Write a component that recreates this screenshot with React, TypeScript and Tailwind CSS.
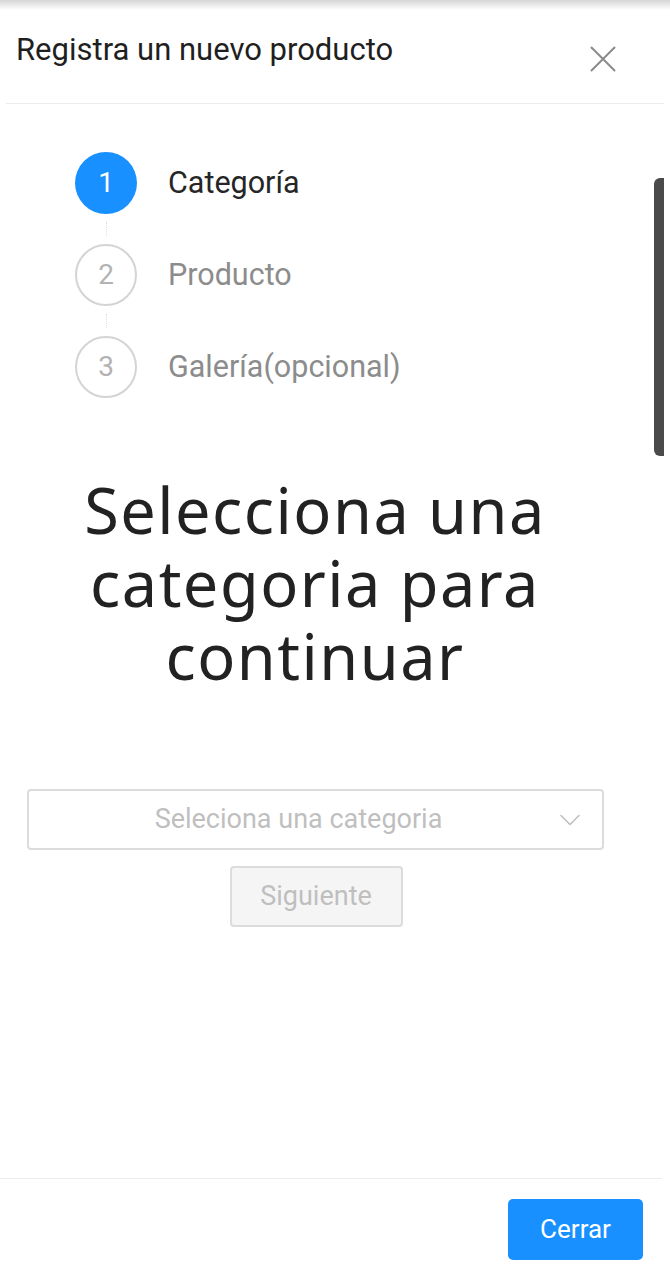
import { ChevronDown, X } from 'lucide-react'

const steps = [
  { n: 1, label: 'Categoría', active: true },
  { n: 2, label: 'Producto', active: false },
  { n: 3, label: 'Galería(opcional)', active: false },
]

export default function App() {
  return (
    <div className="relative w-[670px] h-[1280px] bg-white overflow-hidden font-['Roboto',sans-serif]">
      {/* top shadow */}
      <div className="h-[10px] bg-gradient-to-b from-[#d6d6d6] to-white" />

      {/* Header */}
      <div className="flex items-center justify-between h-[94px] pl-4 pr-[38px] mx-[6px] border-b border-[#ececec]">
        <h1 className="text-[31px] text-[#1f1f1f] -mt-[13px] -ml-[6px]">Registra un nuevo producto</h1>
        <X className="w-[46px] h-[46px] text-[#8a8a8a] mt-[4px]" strokeWidth={1} />
      </div>

      {/* Steps */}
      <div className="flex flex-col pl-[75px] pt-[48px]">
        {steps.map((s, i) => (
          <div key={s.n} className="flex flex-col">
            <div className="flex items-center gap-[31px]">
              <div
                className={
                  s.active
                    ? 'w-[62px] h-[62px] rounded-full bg-[#1890ff] text-white flex items-center justify-center text-[28px]'
                    : 'w-[62px] h-[62px] rounded-full border-2 border-[#d4d4d4] text-[#b3b3b3] flex items-center justify-center text-[28px]'
                }
              >
                {s.n}
              </div>
              <span className={s.active ? 'text-[30.5px] text-[#262626]' : 'text-[30.5px] text-[#8c8c8c]'}>
                {s.label}
              </span>
            </div>
            {i < steps.length - 1 && (
              <div className="w-[62px] h-[30px] flex justify-center py-[8px]">
                <div className="w-px h-full border-l border-dotted border-[#e0e0e0]" />
              </div>
            )}
          </div>
        ))}
      </div>

      {/* Heading */}
      <h2 className="mt-[75px] text-center text-[63px] leading-[73px] text-[#222] font-['Noto_Sans',sans-serif] font-normal tracking-[1.5px] pl-[30px] pr-[70px]">
        Selecciona una categoria para continuar
      </h2>

      {/* Select */}
      <div className="mt-[97px] mx-[27px] w-[577px] h-[61px] border-2 border-[#dcdcdc] rounded-[4px] relative flex items-center justify-center">
        <span className="text-[27px] text-[#bfbfbf] -ml-[34px]">Seleciona una categoria</span>
        <ChevronDown className="absolute right-[14px] w-[36px] h-[36px] text-[#bdbdbd]" strokeWidth={1} />
      </div>

      <div className="flex justify-center mt-[16px] -ml-[38px]">
        <button className="w-[173px] h-[61px] bg-[#f5f5f5] border-2 border-[#dcdcdc] rounded-[4px] text-[27px] text-[#bfbfbf]">
          Siguiente
        </button>
      </div>

      {/* Footer */}
      <div className="absolute left-0 right-[8px] top-[1178px] border-t border-[#ececec] flex justify-end pt-[20px] pr-[19px]">
        <button className="w-[135px] h-[61px] bg-[#1890ff] rounded-[5px] text-[26px] text-white">Cerrar</button>
      </div>

      {/* scrollbar */}
      <div className="absolute right-[6px] top-[178px] w-[10px] h-[278px] bg-[#4a4a4a] rounded-l-[6px]" />
    </div>
  )
}
